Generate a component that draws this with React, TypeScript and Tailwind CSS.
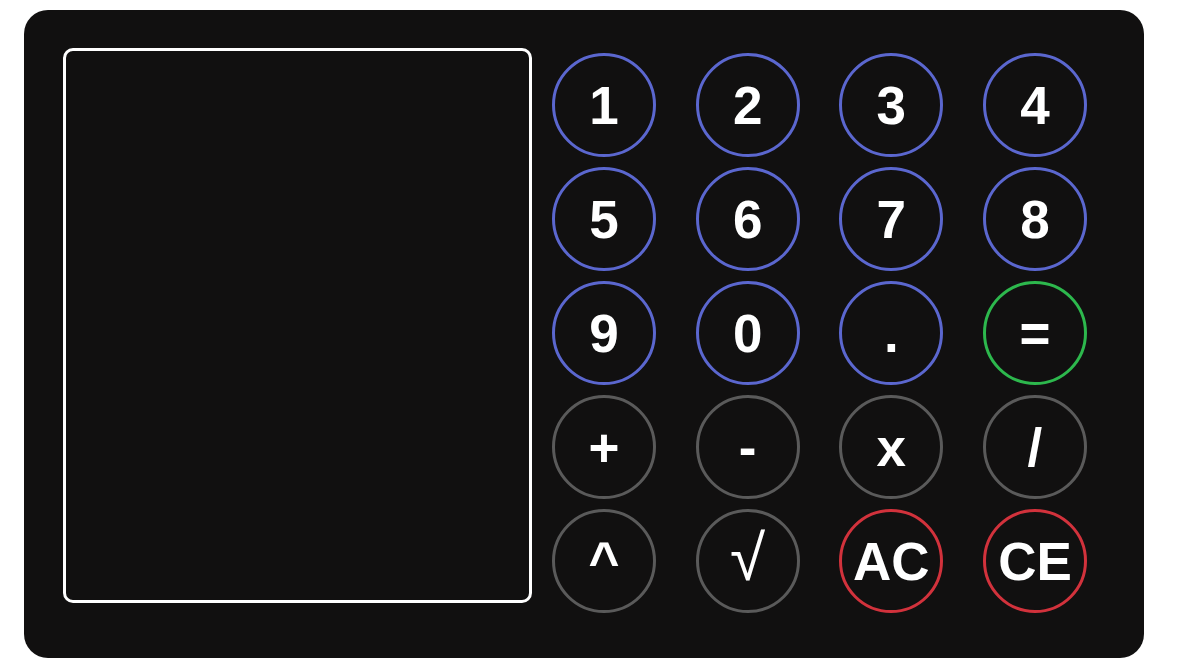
const keys = [
  { label: '1', kind: 'num' },
  { label: '2', kind: 'num' },
  { label: '3', kind: 'num' },
  { label: '4', kind: 'num' },
  { label: '5', kind: 'num' },
  { label: '6', kind: 'num' },
  { label: '7', kind: 'num' },
  { label: '8', kind: 'num' },
  { label: '9', kind: 'num' },
  { label: '0', kind: 'num' },
  { label: '.', kind: 'num' },
  { label: '=', kind: 'eq' },
  { label: '+', kind: 'op' },
  { label: '-', kind: 'op' },
  { label: 'x', kind: 'op' },
  { label: '/', kind: 'op' },
  { label: '^', kind: 'op' },
  { label: '√', kind: 'root' },
  { label: 'AC', kind: 'clear' },
  { label: 'CE', kind: 'clear' },
]

const ringClass: Record<string, string> = {
  num: 'border-[#5b67cf]',
  eq: 'border-[#2db84d]',
  op: 'border-[#5a5a5a]',
  root: 'border-[#5a5a5a]',
  clear: 'border-[#d2323c]',
}

/* Bouton rond du clavier */
const Key = ({ label, kind }: { label: string; kind: string }) => {
  const font =
    kind === 'root'
      ? "font-['Liberation_Sans',Arial,sans-serif] font-normal text-[64px] pb-[6px]"
      : "font-['Liberation_Sans',Arial,sans-serif] font-bold text-[53px]"
  return (
    <button
      className={`w-[104px] h-[104px] rounded-full border-[3px] ${ringClass[kind]} bg-transparent text-white flex items-center justify-center leading-none ${font}`}
    >
      {label}
    </button>
  )
}

export default function App() {
  return (
    <div className="min-h-screen bg-white pt-[10px] pl-[24px]">
      <div className="w-[1120px] h-[648px] bg-[#111010] rounded-[24px] flex pl-[39px] pt-[38px] gap-[20px]">
        <div className="w-[469px] h-[555px] border-[3px] border-white rounded-[10px]"></div>
        <div className="grid grid-cols-4 w-[535px] gap-x-[39.67px] gap-y-[10px] mt-[5px] content-start">
          {keys.map((k) => (
            <Key key={k.label} label={k.label} kind={k.kind} />
          ))}
        </div>
      </div>
    </div>
  )
}
